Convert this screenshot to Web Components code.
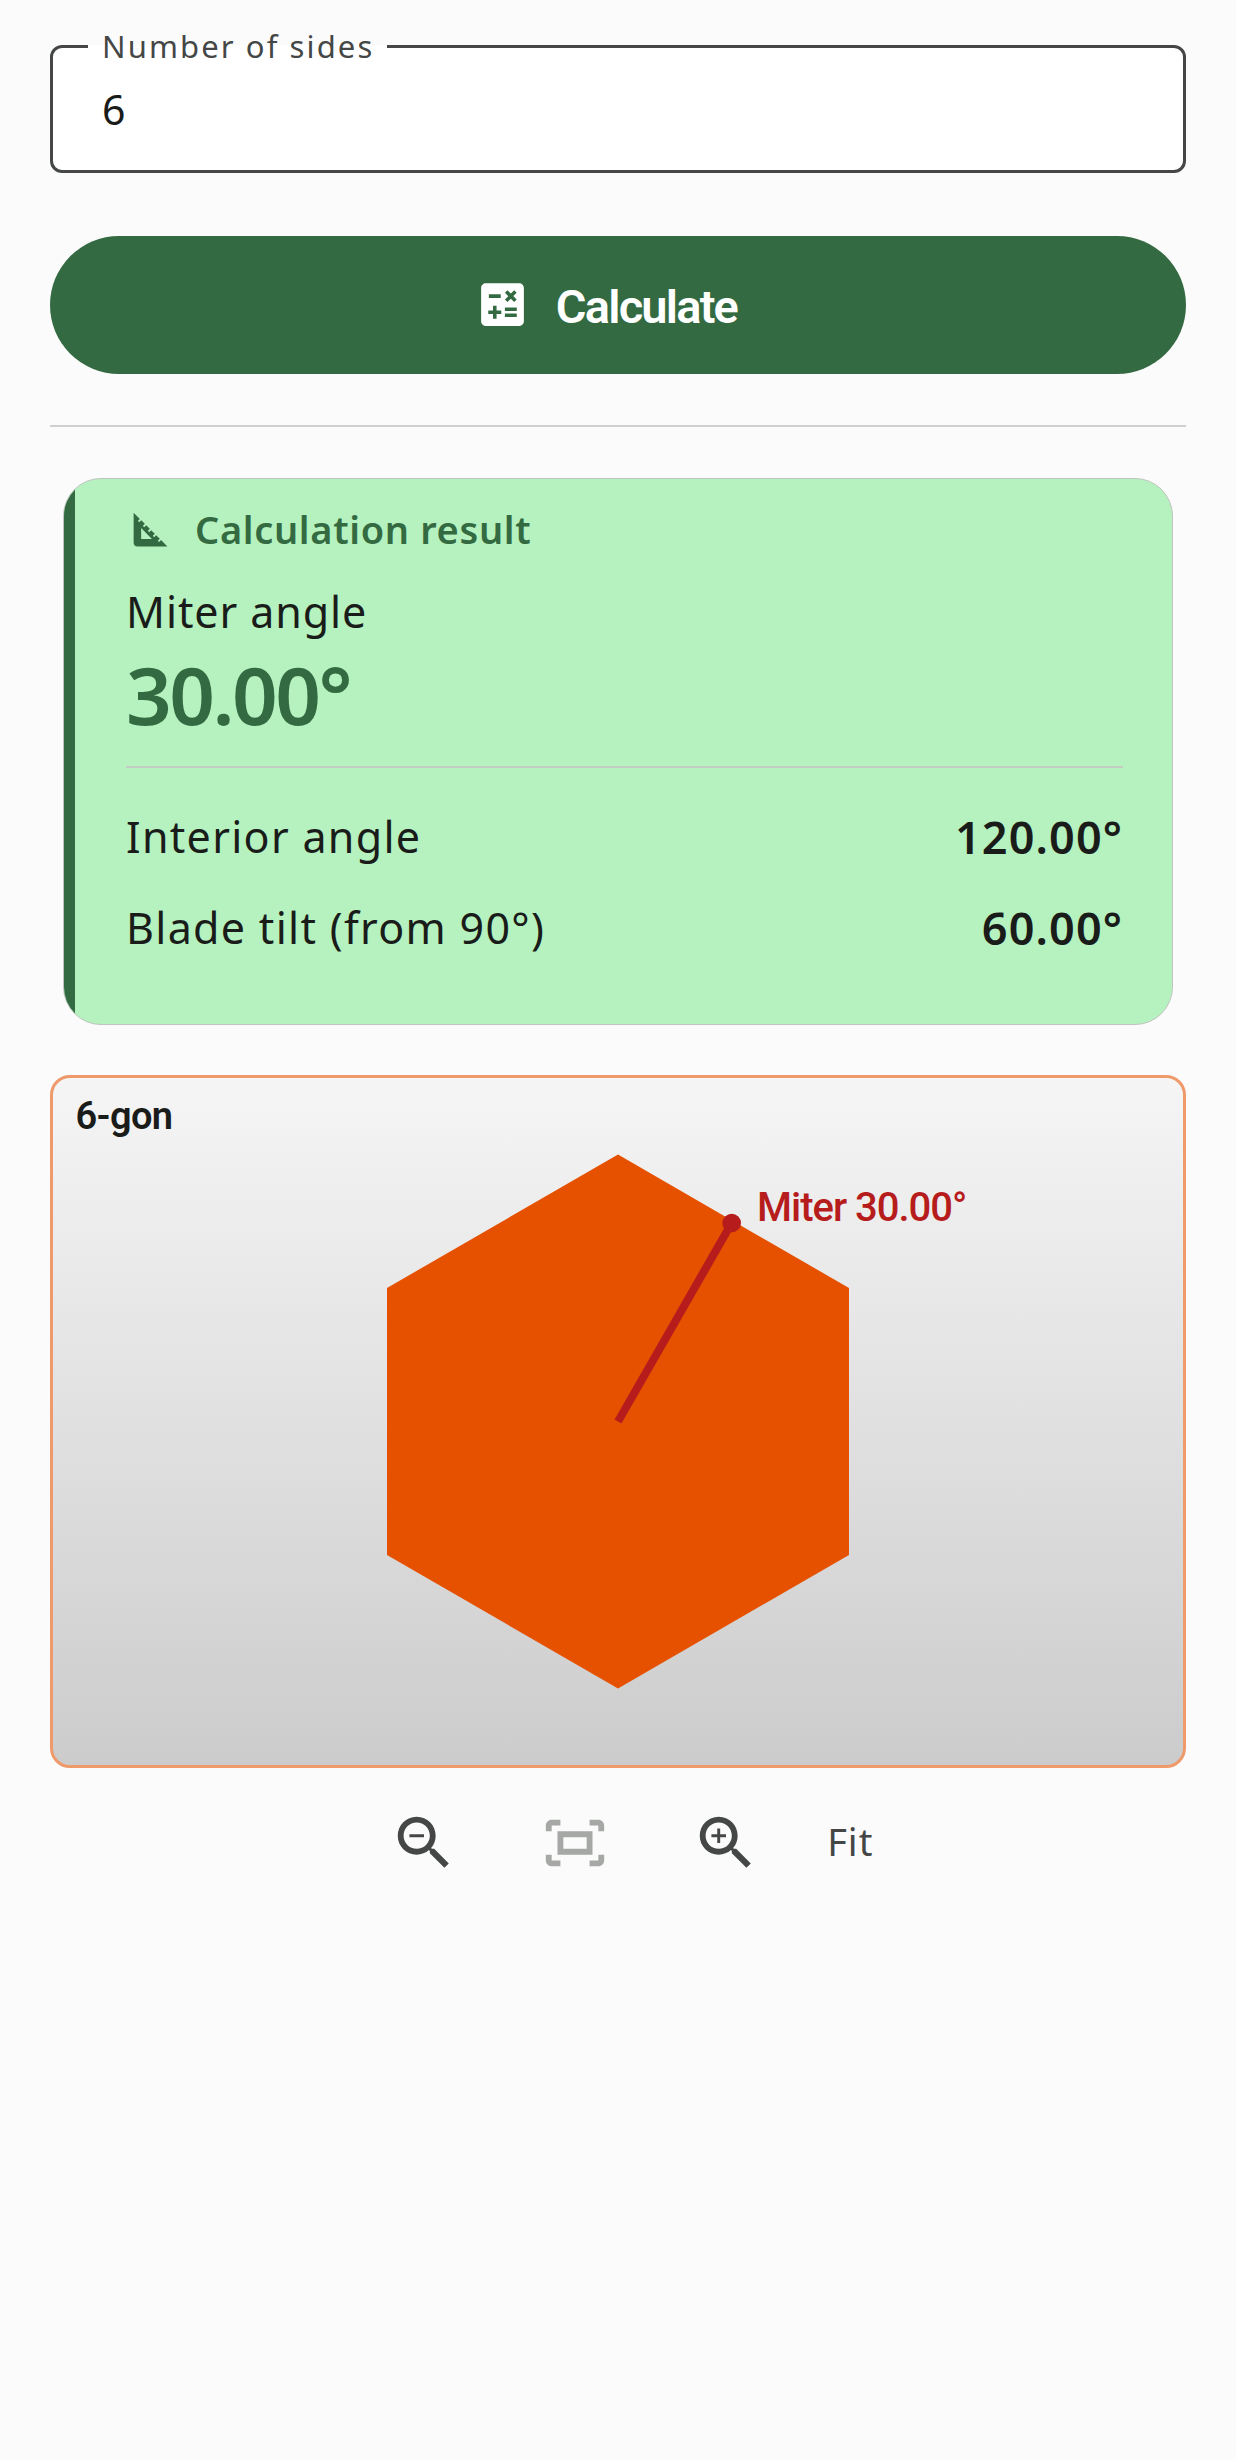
<!DOCTYPE html>
<html>
<head>
<meta charset="utf-8">
<title>Miter angle</title>
<style>
  html, body { margin: 0; background: #fbfbfb; }
  body { min-height: 2460px; padding: 26px 50px 0; box-sizing: border-box; font-family: "Noto Sans", sans-serif; color: #1a1c1a; }
</style>
</head>
<body>
<number-field label="Number of sides" value="6"></number-field>
<calc-button>Calculate</calc-button>
<line-divider></line-divider>
<result-card heading="Calculation result" label="Miter angle" value="30.00°">
  <result-row label="Interior angle" value="120.00°"></result-row>
  <result-row label="Blade tilt (from 90°)" value="60.00°"></result-row>
</result-card>
<polygon-view title-text="6-gon" note="Miter 30.00°"></polygon-view>
<zoom-bar></zoom-bar>

<script>
// material icon paths
const ICONS = {
  calculate: "M19 3H5c-1.1 0-2 .9-2 2v14c0 1.1.9 2 2 2h14c1.1 0 2-.9 2-2V5c0-1.1-.9-2-2-2zm-5.97 4.06L14.09 6l1.41 1.41L16.91 6l1.06 1.06-1.41 1.41 1.41 1.41-1.06 1.06-1.41-1.4-1.41 1.41-1.06-1.06 1.41-1.41-1.41-1.42zm-6.78.66h5v1.5h-5v-1.5zM11.5 16h-2v2H8v-2H6v-1.5h2v-2h1.5v2h2V16zm6.5 1.25h-5v-1.5h5v1.5zm0-2.5h-5v-1.5h5v1.5z",
  squareFoot: "M17.66 17.66l-1.06 1.06-.71-.71 1.06-1.06-1.94-1.94-1.06 1.06-.71-.71 1.06-1.06-1.94-1.94-1.06 1.06-.71-.71 1.06-1.06L9.7 9.7l-1.06 1.06-.71-.71 1.06-1.06-1.94-1.94-1.06 1.06-.71-.71 1.06-1.06L3 3v16c0 1.1.9 2 2 2h16l-3.34-3.34zM7 17v-5.76L12.76 17H7z",
  zoomOut: "M15.5 14h-.79l-.28-.27C15.41 12.59 16 11.11 16 9.5 16 5.91 13.09 3 9.5 3S3 5.91 3 9.5 5.91 16 9.5 16c1.61 0 3.09-.59 4.23-1.57l.27.28v.79l5 4.99L20.49 19l-4.99-5zm-6 0C7.01 14 5 11.99 5 9.5S7.01 5 9.5 5 14 7.01 14 9.5 11.99 14 9.5 14zM7 9h5v1H7z",
  zoomIn: "M15.5 14h-.79l-.28-.27C15.41 12.59 16 11.11 16 9.5 16 5.91 13.09 3 9.5 3S3 5.91 3 9.5 5.91 16 9.5 16c1.61 0 3.09-.59 4.23-1.57l.27.28v.79l5 4.99L20.49 19l-4.99-5zm-6 0C7.01 14 5 11.99 5 9.5S7.01 5 9.5 5 14 7.01 14 9.5 11.99 14 9.5 14zM12 10h-2v2H9v-2H7V9h2V7h1v2h2v1z",
  fit: "M17 4h3c1.1 0 2 .9 2 2v2h-2V6h-3V4zM4 8V6h3V4H4c-1.1 0-2 .9-2 2v2h2zm16 8v2h-3v2h3c1.1 0 2-.9 2-2v-2h-2zM7 18H4v-2H2v2c0 1.1.9 2 2 2h3v-2zM18 8H6v8h12V8zm-2 6H8v-4h8v4z"
};
const icon = (name, size, color) =>
  `<svg width="${size}" height="${size}" viewBox="0 0 24 24" fill="${color}" style="display:block;flex:none"><path d="${ICONS[name]}"/></svg>`;

class NumberField extends HTMLElement {
  constructor() {
    super();
    this.attachShadow({ mode: "open" });
  }
  connectedCallback() {
    this.shadowRoot.innerHTML = `
      <style>
        :host { display: block; }
        fieldset { margin: 0; padding: 0 49px 19px; height: 147px; box-sizing: border-box; border: 3px solid #444746; border-radius: 12px; background: #fff; display: flex; align-items: center; }
        legend { margin-left: -14px; padding: 0 13px 0 14px; font-size: 31px; line-height: 40px; letter-spacing: 2.1px; color: #444746; white-space: nowrap; }
        .val { font-size: 41px; line-height: 56px; color: #1a1c1a; }
      </style>
      <fieldset>
        <legend>${this.getAttribute("label")}</legend>
        <span class="val">${this.getAttribute("value")}</span>
      </fieldset>`;
  }
}

class CalcButton extends HTMLElement {
  constructor() {
    super();
    this.attachShadow({ mode: "open" });
  }
  connectedCallback() {
    this.shadowRoot.innerHTML = `
      <style>
        :host { display: flex; height: 138px; margin-top: 62.5px; padding-right: 25px; box-sizing: border-box; align-items: center; justify-content: center; gap: 25px; background: #346a41; border-radius: 69px; color: #fff; font: 600 47px "Roboto", sans-serif; letter-spacing: -1.8px; }
        span { padding-top: 3px; }
      </style>
      ${icon("calculate", 57, "#fff")}<span><slot></slot></span>`;
  }
}

class LineDivider extends HTMLElement {
  constructor() {
    super();
    this.attachShadow({ mode: "open" }).innerHTML = `
      <style>:host { display: block; height: 2px; margin-top: 51px; background: #cfcfcf; }</style>`;
  }
}

class ResultCard extends HTMLElement {
  constructor() {
    super();
    this.attachShadow({ mode: "open" });
  }
  connectedCallback() {
    this.shadowRoot.innerHTML = `
      <style>
        :host { display: flex; height: 547px; margin: 51.5px 13px 0; box-sizing: border-box; border: 1px solid #bfc4bf; border-radius: 38px; overflow: hidden; background: #b5f2bf; }
        .strip { flex: none; width: 11px; background: #346a41; }
        .body { flex: 1; padding: 28px 49px 0 51px; min-width: 0; }
        .head { display: flex; align-items: center; gap: 22.5px; margin-left: 1.5px; color: #346a41; font-size: 38px; font-weight: 600; line-height: 45px; letter-spacing: 0.66px; }
        .label { margin-top: 30px; font-size: 43px; line-height: 60px; letter-spacing: 0.9px; }
        .big { margin-top: 7px; font-size: 80px; font-weight: 600; line-height: 90px; letter-spacing: -2.5px; color: #346a41; }
        hr { margin: 27px 0 38.5px; border: 0; height: 2px; background: #c4cbc2; }
        .rows { display: flex; flex-direction: column; gap: 31px; }
      </style>
      <div class="strip"></div>
      <div class="body">
        <div class="head">${icon("squareFoot", 45, "#346a41")}<span>${this.getAttribute("heading")}</span></div>
        <div class="label">${this.getAttribute("label")}</div>
        <div class="big">${this.getAttribute("value")}</div>
        <hr>
        <div class="rows"><slot></slot></div>
      </div>`;
  }
}

class ResultRow extends HTMLElement {
  constructor() {
    super();
    this.attachShadow({ mode: "open" });
  }
  connectedCallback() {
    this.shadowRoot.innerHTML = `
      <style>
        :host { display: flex; justify-content: space-between; align-items: center; height: 60px; }
        .l { font-size: 43px; letter-spacing: 1.3px; }
        .v { font-size: 45px; font-weight: 600; letter-spacing: 1.1px; }
      </style>
      <span class="l">${this.getAttribute("label")}</span>
      <span class="v">${this.getAttribute("value")}</span>`;
  }
}

class PolygonView extends HTMLElement {
  constructor() {
    super();
    this.attachShadow({ mode: "open" });
  }
  connectedCallback() {
    this.shadowRoot.innerHTML = `
      <style>
        :host { display: block; height: 693px; margin-top: 49.5px; box-sizing: border-box; border: 3px solid #ef9a6a; border-radius: 20px; overflow: hidden; background: linear-gradient(#f5f5f5, #cccccc); }
        svg { display: block; }
        text { font-family: "Roboto", sans-serif; }
      </style>
      <svg width="1130" height="687" viewBox="3 3 1130 687">
        <polygon points="568,79.5 799,213 799,480 568,613.5 337,480 337,213" fill="#e65100"/>
        <line x1="568" y1="346.5" x2="681.7" y2="148" stroke="#b71c1c" stroke-width="8"/>
        <circle cx="681.7" cy="148" r="9.3" fill="#b71c1c"/>
        <text x="25.5" y="54" font-size="38" font-weight="600" letter-spacing="-0.6" fill="#1a1c1a">${this.getAttribute("title-text")}</text>
        <text x="707" y="146" font-size="40" font-weight="500" letter-spacing="-1" fill="#b71c1c">${this.getAttribute("note")}</text>
      </svg>`;
  }
}

class ZoomBar extends HTMLElement {
  constructor() {
    super();
    this.attachShadow({ mode: "open" });
  }
  connectedCallback() {
    this.shadowRoot.innerHTML = `
      <style>
        :host { display: flex; justify-content: center; align-items: center; margin-top: 40px; height: 70px; }
        .btn { padding: 0 40.5px; }
        .fit { padding: 0 14.5px 3px 26px; font-size: 38px; line-height: 70px; color: #444746; letter-spacing: 1px; }
      </style>
      <div class="btn">${icon("zoomOut", 70, "#444746")}</div>
      <div class="btn">${icon("fit", 70, "#a5a8a4")}</div>
      <div class="btn">${icon("zoomIn", 70, "#444746")}</div>
      <div class="fit">Fit</div>`;
  }
}

customElements.define("number-field", NumberField);
customElements.define("calc-button", CalcButton);
customElements.define("line-divider", LineDivider);
customElements.define("result-card", ResultCard);
customElements.define("result-row", ResultRow);
customElements.define("polygon-view", PolygonView);
customElements.define("zoom-bar", ZoomBar);
</script>
</body>
</html>
